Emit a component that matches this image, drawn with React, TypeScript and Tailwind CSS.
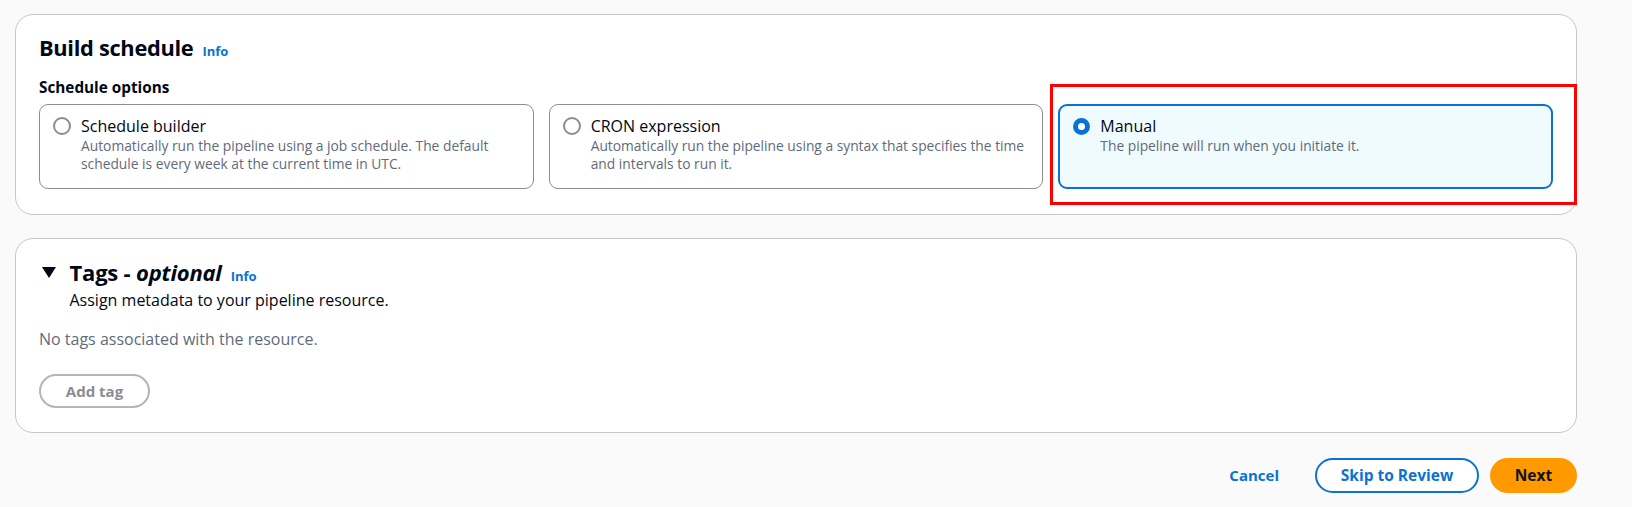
import React from "react";

const font = { fontFamily: '"Open Sans", "Noto Sans", Arial, sans-serif' };

interface TileProps {
  label: string;
  description: string;
  selected?: boolean;
}

const Tile: React.FC<TileProps> = ({ label, description, selected }) => {
  return (
    <div
      className={
        selected
          ? "h-[85px] rounded-[9px] border-2 border-[#0972d3] bg-[#f0fbff] pl-[12px] pr-[13px] pt-[9px]"
          : "h-[85px] rounded-[9px] border border-[#8c8c94] bg-white pl-[13px] pr-[14px] pt-[10px]"
      }
    >
      <div className="flex items-start gap-[10px]">
        <div className="h-[22px] w-[18px] flex items-center justify-center shrink-0">
          {selected ? (
            <span className="block w-[17px] h-[17px] rounded-full border-[5.5px] border-[#0972d3] bg-white" />
          ) : (
            <span className="block w-[18px] h-[18px] rounded-full border-2 border-[#8c8c94] bg-white" />
          )}
        </div>
        <div className="min-w-0">
          <div className="text-[16px] leading-[22px] text-[#000716]">{label}</div>
          <div className="text-[13.8px] leading-[18px] text-[#5f6b7a]">{description}</div>
        </div>
      </div>
    </div>
  );
};

export default function App() {
  return (
    <div className="relative min-h-[507px] bg-[#fafafa] pl-[15px] pr-[55px] pt-[14px]" style={font}>
      {/* Build schedule */}
      <div className="rounded-[18px] border border-[#c6c6cd] bg-white px-[23px] pt-[19px] pb-[25px]">
        <div className="flex items-baseline gap-[9px] leading-[28px]">
          <h2 className="text-[21.8px] font-bold text-[#000716] tracking-[-0.3px]">Build schedule</h2>
          <a className="text-[13px] font-bold leading-[20px] text-[#0972d3]">Info</a>
        </div>
        <div className="mt-[14px] text-[15.3px] font-bold leading-[22px] text-[#000716]">Schedule options</div>
        <div className="mt-[6px] grid grid-cols-3 gap-[15px]">
          <Tile
            label="Schedule builder"
            description="Automatically run the pipeline using a job schedule. The default schedule is every week at the current time in UTC."
          />
          <Tile
            label="CRON expression"
            description="Automatically run the pipeline using a syntax that specifies the time and intervals to run it."
          />
          <Tile label="Manual" description="The pipeline will run when you initiate it." selected />
        </div>
      </div>

      {/* Tags */}
      <div className="mt-[23px] h-[195px] rounded-[18px] border border-[#c6c6cd] bg-white px-[23px] pt-[19px]">
        <div className="flex items-center">
          <svg width="14" height="11" viewBox="0 0 14 11" className="ml-[2.5px] mr-[14px]">
            <path d="M0 0 L14 0 L7 11 Z" fill="#000716" />
          </svg>
          <div className="flex items-baseline gap-[9px] leading-[28px]">
            <h2 className="text-[22px] font-bold text-[#000716] tracking-[-0.2px]">
              Tags - <i>optional</i>
            </h2>
            <a className="text-[13px] font-bold leading-[20px] text-[#0972d3]">Info</a>
          </div>
        </div>
        <div className="ml-[30.5px] mt-[3px] text-[16px] leading-[22px] text-[#000716]">
          Assign metadata to your pipeline resource.
        </div>
        <div className="mt-[17px] text-[16px] leading-[22px] text-[#5f6b7a]">No tags associated with the resource.</div>
        <button className="mt-[24px] h-[34px] w-[111px] rounded-full border-2 border-[#b4b4bb] bg-white text-[15px] font-bold text-[#8c8c94]">
          Add tag
        </button>
      </div>

      {/* Actions */}
      <div className="mt-[25px] flex items-center justify-end">
        <button className="mr-[36px] text-[15px] font-bold text-[#0972d3]">Cancel</button>
        <button className="h-[35px] w-[164px] rounded-full border-2 border-[#0972d3] bg-white text-[15.5px] font-bold text-[#0972d3]">
          Skip to Review
        </button>
        <button className="ml-[11px] h-[35px] w-[87px] rounded-full bg-[#ff9900] text-[15.5px] font-bold text-[#0f141a]">
          Next
        </button>
      </div>

      {/* highlight annotation */}
      <div className="pointer-events-none absolute left-[1050px] top-[84px] h-[121px] w-[527px] border-[3px] border-[#ff0000]" />
    </div>
  );
}
